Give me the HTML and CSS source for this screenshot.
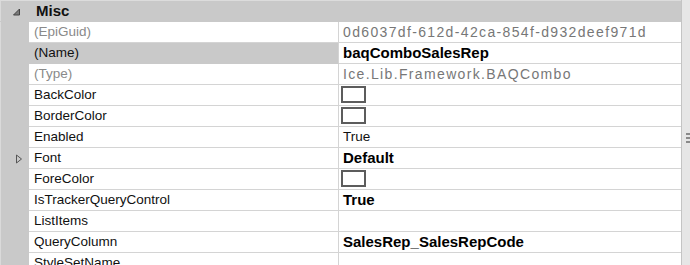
FILE: index.html
```html
<!DOCTYPE html>
<html>
<head>
<meta charset="utf-8">
<link rel="stylesheet" href="styles.css">
</head>
<body>
<div class="frame">
  <div class="grid">
    <div class="row header">
      <div class="gutter">
        <svg class="collapse" width="9" height="8" viewBox="0 0 9 8"><path d="M7.5 1 L7.5 7 L1.5 7 Z" fill="#7a7a7a" stroke="#444" stroke-width="1" stroke-linejoin="miter"/></svg>
      </div>
      <div class="cat">Misc</div>
    </div>
    <div class="row ro">
      <div class="gutter"></div>
      <div class="name">(EpiGuid)</div>
      <div class="val grayval">0d6037df-612d-42ca-854f-d932deef971d</div>
    </div>
    <div class="row selected">
      <div class="gutter"></div>
      <div class="name">(Name)</div>
      <div class="val bold">baqComboSalesRep</div>
    </div>
    <div class="row ro">
      <div class="gutter"></div>
      <div class="name">(Type)</div>
      <div class="val grayval">Ice.Lib.Framework.BAQCombo</div>
    </div>
    <div class="row">
      <div class="gutter"></div>
      <div class="name">BackColor</div>
      <div class="val"><span class="swatch"></span></div>
    </div>
    <div class="row">
      <div class="gutter"></div>
      <div class="name">BorderColor</div>
      <div class="val"><span class="swatch"></span></div>
    </div>
    <div class="row">
      <div class="gutter"></div>
      <div class="name">Enabled</div>
      <div class="val">True</div>
    </div>
    <div class="row">
      <div class="gutter">
        <svg class="expand" width="8" height="10" viewBox="0 0 8 10"><path d="M1.5 1 L6.5 5 L1.5 9 Z" fill="none" stroke="#555" stroke-width="1"/></svg>
      </div>
      <div class="name">Font</div>
      <div class="val bold">Default</div>
    </div>
    <div class="row">
      <div class="gutter"></div>
      <div class="name">ForeColor</div>
      <div class="val"><span class="swatch"></span></div>
    </div>
    <div class="row">
      <div class="gutter"></div>
      <div class="name">IsTrackerQueryControl</div>
      <div class="val bold">True</div>
    </div>
    <div class="row">
      <div class="gutter"></div>
      <div class="name">ListItems</div>
      <div class="val"></div>
    </div>
    <div class="row">
      <div class="gutter"></div>
      <div class="name">QueryColumn</div>
      <div class="val bold">SalesRep_SalesRepCode</div>
    </div>
    <div class="row">
      <div class="gutter"></div>
      <div class="name">StyleSetName</div>
      <div class="val"></div>
    </div>
  </div>
  <div class="scroll">
    <div class="grip"><span></span><span></span><span></span></div>
  </div>
</div>
</body>
</html>
```
FILE: styles.css
```css
html, body {
  margin: 0;
  padding: 0;
  width: 690px;
  height: 265px;
  overflow: hidden;
  background: #ffffff;
}
.frame {
  display: flex;
  width: 690px;
  height: 265px;
  font-family: "Liberation Sans", Arial, sans-serif;
  font-size: 13.5px;
  color: #111;
}
.grid {
  width: 681px;
  display: flex;
  flex-direction: column;
  border-top: 1px solid #dcdcdc;
  box-sizing: border-box;
}
.row {
  display: flex;
  height: 21px;
  flex: none;
}
.gutter {
  width: 29px;
  flex: none;
  background: #c9c9c9;
  display: flex;
  align-items: center;
  justify-content: center;
  border-left: 1px solid #dadada;
  box-sizing: border-box;
}
.collapse {
  margin-left: 3px;
  margin-top: 1px;
}
.expand {
  margin-left: 7px;
}
.header {
  height: 20px;
  background: #c9c9c9;
  border-bottom: 1px solid #c9c9c9;
}
.cat {
  font-weight: bold;
  font-size: 15px;
  padding-left: 7px;
  display: flex;
  align-items: center;
  line-height: 20px;
}
.name {
  width: 310px;
  flex: none;
  box-sizing: border-box;
  padding-left: 5px;
  border-right: 1px solid #d4d4d4;
  border-bottom: 1px solid #d4d4d4;
  height: 21px;
  line-height: 20px;
  white-space: nowrap;
  overflow: hidden;
}
.val {
  flex: 1;
  box-sizing: border-box;
  padding-left: 4px;
  border-bottom: 1px solid #d4d4d4;
  height: 21px;
  line-height: 20px;
  white-space: nowrap;
  overflow: hidden;
}
.ro .name {
  color: #8a8a8a;
}
.grayval {
  color: #777;
  font-size: 14px;
  letter-spacing: 1.35px;
}
.selected .name {
  background: #c9c9c9;
  border-bottom-color: #c9c9c9;
}
.bold {
  font-weight: bold;
  font-size: 15px;
  color: #000;
}
.swatch {
  display: block;
  width: 25px;
  height: 17px;
  margin-top: 1px;
  margin-left: -2px;
  box-sizing: border-box;
  border: 2px solid #5c5c5c;
  background: #fff;
}
.scroll {
  width: 9px;
  flex: none;
  background: #e6e6e6;
  border-left: 1px solid #c4c4c4;
  box-sizing: border-box;
  display: flex;
  flex-direction: column;
  justify-content: center;
  align-items: flex-end;
}
.grip {
  display: flex;
  flex-direction: column;
  gap: 2px;
  margin-top: 10px;
}
.grip span {
  display: block;
  width: 4px;
  height: 2px;
  background: #8a8a8a;
}
```
